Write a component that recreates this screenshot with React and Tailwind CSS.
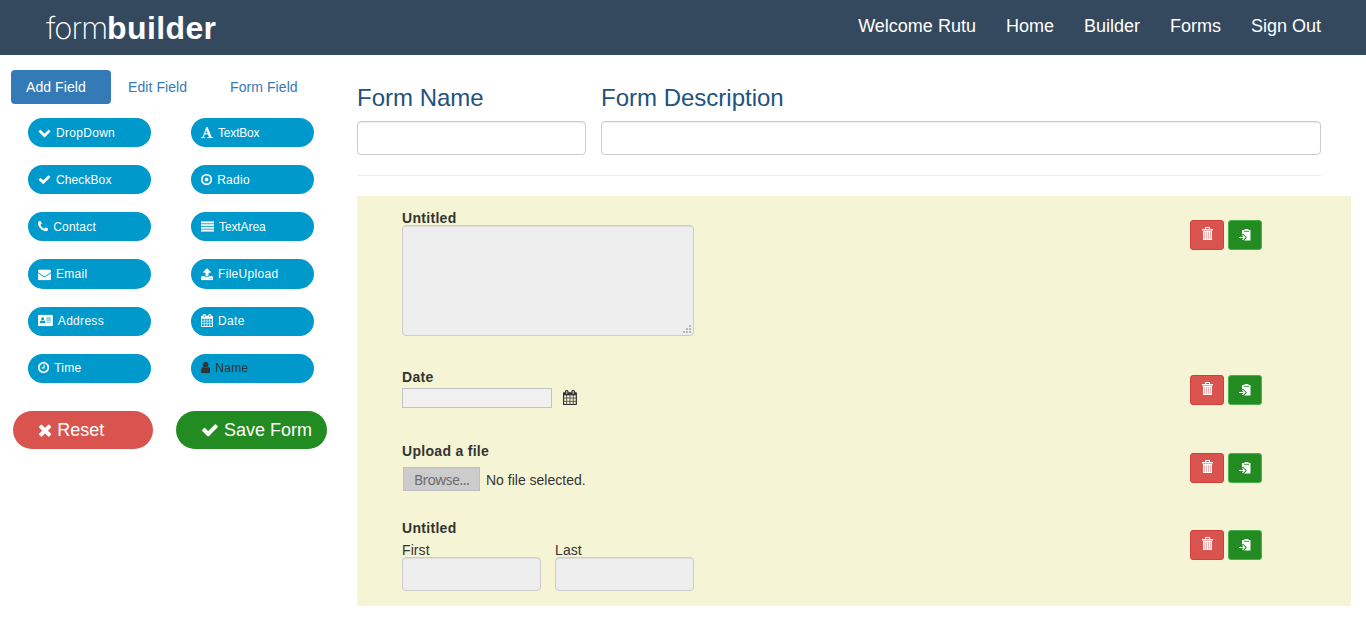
import React from "react";

const ICONS = {
  chevron: ["0 0 1792 1792", "M1683 808l-742 741q-19 19-45 19t-45-19l-742-741q-19-19-19-45.5t19-45.5l166-165q19-19 45-19t45 19l531 531 531-531q19-19 45-19t45 19l166 165q19 19 19 45.5t-19 45.5z"],
  check: ["0 0 1792 1792", "M1671 566q0 40-28 68l-724 724-136 136q-28 28-68 28t-68-28l-136-136-362-362q-28-28-28-68t28-68l136-136q28-28 68-28t68 28l294 295 656-657q28-28 68-28t68 28l136 136q28 28 28 68z"],
  phone: ["192 0 1408 1792", "M1600 1240q0 27-10 70.5t-21 68.5q-21 50-122 106-94 51-186 51-27 0-53-3.5t-57.5-12.5-47-14.5-55.5-20.5-49-18q-98-35-175-83-127-79-264-216t-216-264q-48-77-83-175-3-9-18-49t-20.5-55.5-14.5-47-12.5-57.5-3.5-53q0-92 51-186 56-101 106-122 25-11 68.5-21t70.5-10q14 0 21 3 18 6 53 76 11 19 30 54t35 63.5 31 53.5q3 4 17.5 25t21.5 35.5 7 28.5q0 20-28.5 50t-62 55-62 53-28.5 46q0 9 5 22.5t8.5 20.5 14 24 11.5 19q76 137 174 235t235 174q2 1 19 11.5t24 14 20.5 8.5 22.5 5q18 0 46-28.5t53-62 55-62 50-28.5q14 0 28.5 7t35.5 21.5 25 17.5q25 15 53.5 31t63.5 35 54 30q70 35 76 53 3 7 3 21z"],
  envelope: ["0 0 1792 1792", "M1792 710v794q0 66-47 113t-113 47h-1472q-66 0-113-47t-47-113v-794q44 49 101 87 362 246 497 345 57 42 92.5 65.5t94.5 48 110 24.5h2q51 0 110-24.5t94.5-48 92.5-65.5q170-123 498-345 57-39 100-87zm0-294q0 79-49 151t-122 123q-376 261-468 325-10 7-42.5 31t-54 38.5-52 32.5-57.5 27-50 9h-2q-23 0-50-9t-57.5-27-52-32.5-54-38.5-42.5-31q-91-64-262-182.5t-205-142.5q-62-42-117-115.5t-55-136.5q0-78 41.5-130t118.5-52h1472q65 0 112.5 47t47.5 113z"],
  card: ["0 0 2048 1792", "M152 128h1744q63 0 107.500 44.500t44.500 107.500v1232q0 63-44.500 107.500t-107.500 44.500h-1744q-63 0-107.500-44.500t-44.500-107.500v-1232q0-63 44.500-107.500t107.500-44.500zM256 1180q0 100 90 100h588q90 0 90-100q0-300-180-300q-90 80-204 80t-204-80q-180 0-180 300zM640 448a224 224 0 1 0 0 448a224 224 0 1 0 0-448zM1152 480v128h640v-128zM1152 768v128h640v-128zM1152 1056v128h640v-128z"],
  clock: ["128 0 1536 1792", "M1024 544v448q0 14-9 23t-23 9h-320q-14 0-23-9t-9-23v-64q0-14 9-23t23-9h224v-352q0-14 9-23t23-9h64q14 0 23 9t9 23zm416 352q0-148-73-273t-198-198-273-73-273 73-198 198-73 273 73 273 198 198 273 73 273-73 198-198 73-273zm224 0q0 209-103 385.5t-279.5 279.5-385.5 103-385.5-103-279.5-279.5-103-385.500 103-385.500 279.500-279.500 385.500-103 385.500 103 279.500 279.500 103 385.500z"],
  font: ["64 0 1664 1792", "M789 559l-170 450q33 0 136.5 2t160.5 2q19 0 57-2-87-253-184-452zm-725 1105l2-79q23-7 56-12.5t57-10.5 49.5-14.5 44.5-29 31-50.5l237-616 280-724h128q8 14 11 21l205 480q33 78 106 257.5t114 274.5q15 34 58 144.5t72 168.5q20 45 35 57 19 15 88 29.5t84 20.5q6 38 6 57 0 5-.5 13.5t-.5 12.5q-63 0-190-8t-191-8q-76 0-215 7t-178 8q0-43 4-78l131-28q1 0 12.5-2.5t15.5-3.5 14.5-4.5 15-6.5 11-8 9-11 2.5-14q0-16-31-96.5t-72-177.5-42-100l-450-2q-26 58-76.5 195.5t-50.5 162.5q0 22 14 37.5t43.5 24.5 48.5 13.5 57 8.500 41 4q1 19 1 58 0 9-2 27-58 0-174.5-10t-174.5-10q-8 0-26.5 4t-21.5 4q-80 14-188 14z"],
  radio: ["128 0 1536 1792", "M896 640a256 256 0 1 0 0 512a256 256 0 1 0 0-512zM896 352a544 544 0 1 0 0 1088a544 544 0 1 0 0-1088zM896 128a768 768 0 1 1 0 1536a768 768 0 1 1 0-1536z"],
  lines: ["0 0 1792 1792", "M0 200h1792v250h-1792zM0 584h1792v250h-1792zM0 968h1792v250h-1792zM0 1352h1792v250h-1792z"],
  upload: ["64 0 1664 1792", "M1344 1472q0-26-19-45t-45-19-45 19-19 45 19 45 45 19 45-19 19-45zm256 0q0-26-19-45t-45-19-45 19-19 45 19 45 45 19 45-19 19-45zm128-224v320q0 40-28 68t-68 28h-1472q-40 0-68-28t-28-68v-320q0-40 28-68t68-28h427q21 56 70.5 92t110.5 36h256q61 0 110.5-36t70.5-92h427q40 0 68 28t28 68zm-325-648q-17 40-59 40h-256v448q0 26-19 45t-45 19h-256q-26 0-45-19t-19-45v-448h-256q-42 0-59-40-17-39 14-69l448-448q18-19 45-19t45 19l448 448q31 30 14 69z"],
  calendar: ["64 0 1664 1792", "M192 1664h288v-288h-288v288zm352 0h320v-288h-320v288zm-352-352h288v-320h-288v320zm352 0h320v-320h-320v320zm-352-384h288v-288h-288v288zm736 736h320v-288h-320v288zm-384-736h320v-288h-320v288zm768 736h288v-288h-288v288zm-384-352h320v-320h-320v320zm-352-864v-288q0-13-9.5-22.5t-22.5-9.5h-64q-13 0-22.5 9.5t-9.5 22.5v288q0 13 9.5 22.5t22.5 9.5h64q13 0 22.5-9.5t9.5-22.5zm736 864h288v-320h-288v320zm-384-384h320v-288h-320v288zm384 0h288v-288h-288v288zm32-480v-288q0-13-9.5-22.5t-22.5-9.5h-64q-13 0-22.5 9.5t-9.5 22.5v288q0 13 9.5 22.5t22.5 9.5h64q13 0 22.5-9.5t9.5-22.5zm384-64v1280q0 52-38 90t-90 38h-1408q-52 0-90-38t-38-90v-1280q0-52 38-90t90-38h128v-96q0-66 47-113t113-47h64q66 0 113 47t47 113v96h384v-96q0-66 47-113t113-47h64q66 0 113 47t47 113v96h128q52 0 90 38t38 90z"],
  user: ["256 0 1280 1792", "M1536 1399q0 109-62.5 187t-150.5 78h-854q-88 0-150.5-78t-62.5-187q0-85 8.5-160.5t31.5-152 58.5-131 94-89 134.5-34.5q131 128 313 128t313-128q76 0 134.5 34.5t94 89 58.5 131 31.5 152 8.5 160.5zm-256-887q0 159-112.5 271.5t-271.5 112.5-271.5-112.5-112.5-271.5 112.5-271.5 271.5-112.5 271.5 112.5 112.5 271.5z"],
  times: ["192 0 1408 1792", "M1490 1322q0 40-28 68l-136 136q-28 28-68 28t-68-28l-294-294-294 294q-28 28-68 28t-68-28l-136-136q-28-28-28-68t28-68l294-294-294-294q-28-28-28-68t28-68l136-136q28-28 68-28t68 28l294 294 294-294q28-28 68-28t68 28l136 136q28 28 28 68t-28 68l-294 294 294 294q28 28 28 68z"],
};

function Icon({ name, className = "h-[13px]" }) {
  const [viewBox, d] = ICONS[name];
  return (
    <svg viewBox={viewBox} className={`${className} w-auto shrink-0 fill-current`}>
      <path d={d} fillRule="evenodd" stroke="currentColor" strokeWidth="24" />
    </svg>
  );
}

const FIELDS = [
  ["chevron", "DropDown", "tracking-[0.3px]"],
  ["font", "TextBox", "tracking-[-0.2px]"],
  ["check", "CheckBox", "tracking-[0.1px]"],
  ["radio", "Radio", "tracking-[0.3px]"],
  ["phone", "Contact", "tracking-[0.2px]"],
  ["lines", "TextArea", "tracking-[-0.1px]"],
  ["envelope", "Email", "tracking-[0.3px]"],
  ["upload", "FileUpload", "tracking-[0.3px]"],
  ["card", "Address", "tracking-[0.3px] pb-0.5"],
  ["calendar", "Date", "tracking-[0.3px] pb-0.5"],
  ["clock", "Time", "tracking-[0.3px] pb-0.5"],
  ["user", "Name", "tracking-[0.3px] pb-0.5"],
];

function Sidebar() {
  return (
    <aside className="w-[357px] shrink-0 pt-[15px]">
      <nav className="ml-[11px] flex text-sm leading-5 tracking-[0.08px] text-[#337ab7]">
        <a className="h-[34px] w-[100px] rounded bg-[#337ab7] pt-[7px] pl-[15px] text-white">Add Field</a>
        <a className="w-[102px] pt-[7px] pl-[17px]">Edit Field</a>
        <a className="pt-[7px] pl-[17px]">Form Field</a>
      </nav>
      <div className="mt-3.5 ml-7 grid grid-cols-[123px_123px] grid-rows-[29px_29px_29px_30px_29px_29px] gap-x-10 gap-y-[18px]">
        {FIELDS.map(([icon, label, text]) => (
          <button
            key={label}
            className={`flex items-center gap-[5px] rounded-full bg-[#0099cc] pl-2.5 text-xs ${text} ${label === "Name" ? "text-[#333]" : "text-white"}`}
          >
            <Icon name={icon} />
            <span>{label}</span>
          </button>
        ))}
      </div>
      <div className="mt-7 ml-[13px] flex gap-[23px] text-lg text-white">
        <button className="flex h-[38px] w-[140px] items-center gap-[5px] rounded-full bg-[#d9534f] pl-[25px]">
          <Icon name="times" className="h-[18px]" />
          Reset
        </button>
        <button className="flex h-[38px] w-[151px] items-center gap-[5px] rounded-full bg-[#228b22] pl-[25px]">
          <Icon name="check" className="h-[18px]" />
          Save Form
        </button>
      </div>
    </aside>
  );
}

function RowActions() {
  return (
    <div className="flex gap-1">
      <button className="flex h-[30px] w-[34px] justify-center rounded-[3px] border border-[#d43f3a] bg-[#d9534f] pt-1.5 pl-px">
        <svg viewBox="0 0 13 14" className="h-3.5 w-[13px]" fill="#fff">
          <path d="M4 0h5v2h3v1.500H1V2h3zM5 1v1h3V1z" fillRule="evenodd" />
          <path d="M2 4h9v9H2z" fillOpacity=".55" />
          <path d="M2 4h9v1H2zM2 12h9v1H2zM2 4h1v9H2zM4 4h1v9H4zM6 4h1v9H6zM8 4h1v9H8zM10 4h1v9h-1z" />
        </svg>
      </button>
      <button className="flex h-[30px] w-[34px] justify-center rounded-[3px] border border-[#4cae4c] bg-[#228b22] pt-2">
        <svg viewBox="0 0 12 12" className="h-3 w-3">
          <path d="M3 1h2l1-1h3l1 1h1.500v10.500H5L7.500 9l-1-1.500L3 5z" fill="#fff" />
          <path d="M5 2.300h5" stroke="#228b22" strokeWidth=".9" />
          <path d="M3.300 5.600l2.900 2.900-2.900 2.900" fill="none" stroke="#228b22" strokeWidth="2.400" />
          <path d="M0 8.500h5.500M3.500 6.200l2.300 2.300-2.300 2.300" fill="none" stroke="#fff" strokeWidth="1.200" />
        </svg>
      </button>
    </div>
  );
}

function FormRow({ className, actionClass, children }) {
  return (
    <div className={`flex ${className}`}>
      <div className="w-[788px]">{children}</div>
      <div className={actionClass}>
        <RowActions />
      </div>
    </div>
  );
}

export default function App() {
  return (
    <div className="h-[635px] w-[1366px] overflow-hidden bg-white font-['Liberation_Sans',Arial,sans-serif] text-sm text-[#333]">
      <header className="flex h-[55px] justify-between bg-[#34495e] pr-[45px] pl-[46px] text-white">
        <div className="flex items-baseline pt-[4px] text-[32px] leading-[48px]">
          <span className="w-[61px] font-['Inter',sans-serif] text-[31px] font-extralight tracking-[-1px]">form</span>
          <span className="font-bold tracking-[0.4px]">builder</span>
        </div>
        <nav className="flex gap-[30px] pt-[13px] text-lg leading-[26px]">
          <a>Welcome Rutu</a>
          <a>Home</a>
          <a>Builder</a>
          <a>Forms</a>
          <a>Sign Out</a>
        </nav>
      </header>
      <div className="flex">
        <Sidebar />
        <main className="w-[994px]">
          <section className="mr-[30px] flex h-[121px] gap-[15px] border-b border-[#eee] pt-[29px] text-2xl leading-[27px] text-[#23527c]">
            <div className="w-[229px]">
              <h3>Form Name</h3>
              <input className="mt-2.5 block h-[34px] w-full rounded border border-[#ccc] shadow-[inset_0_1px_1px_rgba(0,0,0,0.075)]" />
            </div>
            <div className="w-[720px]">
              <h3>Form Description</h3>
              <input className="mt-2.5 block h-[34px] w-full rounded border border-[#ccc] shadow-[inset_0_1px_1px_rgba(0,0,0,0.075)]" />
            </div>
          </section>
          <section className="mt-5 h-[410px] bg-[#f5f5d5] pt-3 pl-[45px] leading-5">
            <FormRow className="h-[159px]" actionClass="pt-3">
              <h4 className="h-[17px] font-bold tracking-[0.3px]">Untitled</h4>
              <div className="flex h-[111px] w-[292px] items-end justify-end rounded border border-[#ccc] bg-[#eee] p-0.5 shadow-[inset_0_1px_1px_rgba(0,0,0,0.075)]">
                <svg viewBox="0 0 9 9" className="size-[9px]" fill="#b8b8b8">
                  <path d="M7 1h2v2H7zM7 4h2v2H7zM4 4h2v2H4zM7 7h2v2H7zM4 7h2v2H4zM1 7h2v2H1z" />
                </svg>
              </div>
            </FormRow>
            <FormRow className="h-[74px]" actionClass="pt-2">
              <h4 className="h-[21px] font-bold tracking-[0.3px]">Date</h4>
              <div className="flex gap-[11px]">
                <input className="h-5 w-[150px] border border-[#c3c3c3] bg-[#f0f0f0]" />
                <Icon name="calendar" className="mt-[2px] h-[15px]" />
              </div>
            </FormRow>
            <FormRow className="h-[77px]" actionClass="pt-3">
              <h4 className="h-[26px] font-bold tracking-[0.3px]">Upload a file</h4>
              <div className="flex items-center gap-1.5 pl-px">
                <span className="h-6 w-[77px] border border-[#bfbfbf] bg-[#ccc] pl-2.5 font-['Noto_Sans','Open_Sans',sans-serif] leading-[23px] tracking-[-0.5px] text-[#6d6d6d]">Browse...</span>
                <span className="pt-0.5">No file selected.</span>
              </div>
            </FormRow>
            <FormRow className="h-[80px]" actionClass="pt-3">
              <h4 className="h-[22px] font-bold tracking-[0.3px]">Untitled</h4>
              <div className="flex gap-3.5">
                {["First", "Last"].map((label) => (
                  <div key={label} className="w-[139px]">
                    <div className="h-[17px] tracking-[0.1px]">{label}</div>
                    <input className="block h-[34px] w-full rounded border border-[#ccc] bg-[#eee] shadow-[inset_0_1px_1px_rgba(0,0,0,0.075)]" />
                  </div>
                ))}
              </div>
            </FormRow>
          </section>
        </main>
      </div>
    </div>
  );
}
